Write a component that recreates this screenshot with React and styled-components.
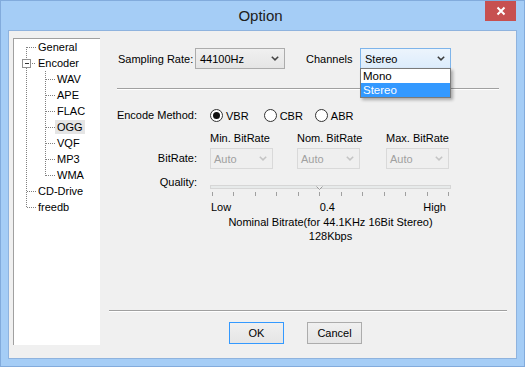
import React from 'react';
import styled, { createGlobalStyle } from 'styled-components';

const treeItems = [
  { label: 'General', level: 0 },
  { label: 'Encoder', level: 0, expander: true },
  { label: 'WAV', level: 1 },
  { label: 'APE', level: 1 },
  { label: 'FLAC', level: 1 },
  { label: 'OGG', level: 1, hovered: true },
  { label: 'VQF', level: 1 },
  { label: 'MP3', level: 1 },
  { label: 'WMA', level: 1 },
  { label: 'CD-Drive', level: 0 },
  { label: 'freedb', level: 0 },
];

const bitrates = [
  { title: 'Min. BitRate', width: 87 },
  { title: 'Nom. BitRate', width: 89 },
  { title: 'Max. BitRate', width: 63 },
];

const TICKS = 12;
const QUALITY_INDEX = 5;

const Chevron = ({ color = '#444' }) => (
  <svg width="8" height="5" viewBox="0 0 8 5">
    <path d="M0.8 0.8 L4 3.9 L7.2 0.8" fill="none" stroke={color} strokeWidth="1.5" />
  </svg>
);

const TreeLines = () => {
  const rowY = (i) => 8 + 16 * i;
  const last = treeItems.length - 1;
  const childRows = treeItems.map((t, i) => (t.level === 1 ? i : null)).filter((i) => i !== null);
  const dot = { stroke: '#808080', strokeDasharray: '1 1', shapeRendering: 'crispEdges' };
  return (
    <LinesSvg width="86" height="306">
      <line x1="12.5" y1={rowY(0)} x2="12.5" y2={rowY(1) - 4} style={dot} />
      <line x1="12.5" y1={rowY(1) + 5} x2="12.5" y2={rowY(last) + 1} style={dot} />
      {treeItems.map((t, i) =>
        t.level === 0 ? (
          <line key={i} x1={t.expander ? 18 : 13} y1={rowY(i) + 0.5} x2="22" y2={rowY(i) + 0.5} style={dot} />
        ) : null
      )}
      <line x1="31.5" y1={rowY(1) + 8} x2="31.5" y2={rowY(childRows[childRows.length - 1]) + 1} style={dot} />
      {childRows.map((i) => (
        <line key={i} x1="32" y1={rowY(i) + 0.5} x2="41" y2={rowY(i) + 0.5} style={dot} />
      ))}
      <rect x="8.5" y="20.5" width="8" height="8" fill="#fff" stroke="#919191" shapeRendering="crispEdges" />
      <line x1="10.5" y1="24.5" x2="15" y2="24.5" stroke="#333" shapeRendering="crispEdges" />
    </LinesSvg>
  );
};

const App = () => {
  return (
    <>
      <GlobalStyle />
      <Window>
        <TitleBar>
          <Title>Option</Title>
          <CloseButton>
            <svg width="10" height="10" viewBox="0 0 10 10">
              <path d="M1.5 1.5 L8.5 8.5 M8.5 1.5 L1.5 8.5" stroke="#fff" strokeWidth="2" />
            </svg>
          </CloseButton>
        </TitleBar>
        <Client>
          <TreePanel>
            <TreeLines />
            {treeItems.map((item) => (
              <TreeRow key={item.label}>
                <TreeLabel $level={item.level} $hovered={item.hovered}>
                  {item.label}
                </TreeLabel>
              </TreeRow>
            ))}
          </TreePanel>

          <Panel>
            <TopRow>
              <Label $width={77}>Sampling Rate:</Label>
              <Combo $width={90}>
                <span>44100Hz</span>
                <Chevron />
              </Combo>
              <Label $width={54} $left={21}>Channels</Label>
              <DropWrap>
                <Combo $width={91} $open>
                  <span>Stereo</span>
                  <Chevron color="#3c3c3c" />
                </Combo>
                <DropList>
                  <DropItem>Mono</DropItem>
                  <DropItem $selected>Stereo</DropItem>
                </DropList>
              </DropWrap>
            </TopRow>

            <Separator $inset={8} $top={19} />

            <FormRow $top={18}>
              <FieldLabel $line={15}>Encode Method:</FieldLabel>
              <RadioOption $gap={15}>
                <Radio $checked />
                VBR
              </RadioOption>
              <RadioOption $gap={12}>
                <Radio />
                CBR
              </RadioOption>
              <RadioOption>
                <Radio />
                ABR
              </RadioOption>
            </FormRow>

            <FormRow $top={8} $align="flex-end">
              <FieldLabel $line={21}>BitRate:</FieldLabel>
              {bitrates.map((b) => (
                <BitrateGroup key={b.title} $width={b.width}>
                  <GroupTitle>{b.title}</GroupTitle>
                  <Combo $width={63} $disabled>
                    <span>Auto</span>
                    <Chevron color="#c4c4c4" />
                  </Combo>
                </BitrateGroup>
              ))}
            </FormRow>

            <FormRow $top={6}>
              <FieldLabel $line={14}>Quality:</FieldLabel>
              <SliderBox>
                <TrackArea>
                  <Track />
                  <Thumb style={{ left: `${2 + (QUALITY_INDEX / (TICKS - 1)) * 236}px` }}>
                    <svg width="7" height="5" viewBox="0 0 7 5">
                      <path d="M0.5 0.5 L3.5 3.5 L6.5 0.5" fill="#f0f0f0" stroke="#9a9a9a" />
                    </svg>
                  </Thumb>
                </TrackArea>
                <Ticks>
                  {Array.from({ length: TICKS }).map((_, i) => (
                    <Tick key={i} />
                  ))}
                </Ticks>
                <Scale>
                  <span>Low</span>
                  <span>0.4</span>
                  <span>High</span>
                </Scale>
                <Info $top={1}>Nominal Bitrate(for 44.1KHz 16Bit Stereo)</Info>
                <Info>128Kbps</Info>
              </SliderBox>
            </FormRow>

            <Spacer />
            <Separator />
            <ButtonRow>
              <Button $default>OK</Button>
              <Button>Cancel</Button>
            </ButtonRow>
          </Panel>
        </Client>
      </Window>
    </>
  );
};

// --- Global ---

const GlobalStyle = createGlobalStyle`
  html, body {
    margin: 0;
    padding: 0;
    background: #a5cdf6;
  }
  body {
    font-family: 'Liberation Sans', Arial, sans-serif;
    font-size: 11px;
    color: #000;
  }
`;

// --- Window frame ---

const Window = styled.div`
  width: 525px;
  height: 367px;
  box-sizing: border-box;
  background: #a5cdf6;
  border: 1px solid #82abdc;
  display: flex;
  flex-direction: column;
`;

const TitleBar = styled.div`
  height: 29px;
  flex: none;
  display: grid;
  grid-template-columns: 1fr auto 1fr;
  align-items: start;
`;

const Title = styled.div`
  grid-column: 2;
  font-size: 15px;
  line-height: 29px;
  color: #202020;
  padding-right: 4px;
`;

const CloseButton = styled.div`
  grid-column: 3;
  justify-self: end;
  margin-right: 8px;
  width: 31px;
  height: 20px;
  background: #c75050;
  display: flex;
  align-items: center;
  justify-content: center;
`;

const Client = styled.div`
  flex: 1;
  margin: 0 7px 7px;
  border: 1px solid #8fb3de;
  background: #f0f0f0;
  display: flex;
  gap: 9px;
  padding: 7px 9px 13px 4px;
  min-height: 0;
`;

// --- Tree ---

const TreePanel = styled.div`
  position: relative;
  width: 87px;
  box-sizing: border-box;
  background: #fff;
  border-top: 1px solid #a0a0a0;
  border-left: 1px solid #a0a0a0;
  display: flex;
  flex-direction: column;
`;

const LinesSvg = styled.svg`
  position: absolute;
  left: 0;
  top: 0;
  pointer-events: none;
`;

const TreeRow = styled.div`
  height: 16px;
  display: flex;
  align-items: center;
`;

const TreeLabel = styled.span`
  margin-left: ${(p) => (p.$level ? 41 : 22)}px;
  padding: 0 2px;
  height: 14px;
  line-height: 14px;
  background: ${(p) => (p.$hovered ? '#e5e5e5' : 'transparent')};
  position: relative;
`;

// --- Right panel ---

const Panel = styled.div`
  flex: 1;
  display: flex;
  flex-direction: column;
`;

const TopRow = styled.div`
  margin-top: 10px;
  height: 21px;
  padding-left: 9px;
  display: flex;
  align-items: center;
`;

const Label = styled.span`
  width: ${(p) => p.$width}px;
  margin-left: ${(p) => p.$left || 0}px;
  white-space: nowrap;
  flex: none;
`;

const Combo = styled.div`
  width: ${(p) => p.$width}px;
  height: 21px;
  box-sizing: border-box;
  display: flex;
  align-items: center;
  justify-content: space-between;
  padding: 0 5px 0 ${(p) => (p.$disabled ? 3 : 4)}px;
  border: 1px solid ${(p) => (p.$open ? '#7eb4ea' : p.$disabled ? '#d9d9d9' : '#acacac')};
  background: ${(p) =>
    p.$open
      ? 'linear-gradient(#ecf4fc, #dcecfc)'
      : p.$disabled
      ? '#efefef'
      : 'linear-gradient(#f0f0f0, #e5e5e5)'};
  color: ${(p) => (p.$disabled ? '#a0a0a0' : '#000')};
  font-size: 11px;
`;

const DropWrap = styled.div`
  position: relative;
`;

const DropList = styled.div`
  position: absolute;
  top: 20px;
  left: 0;
  width: 91px;
  box-sizing: border-box;
  border: 1px solid #7a7a7a;
  background: #fff;
  box-shadow: 2px 2px 3px rgba(0, 0, 0, 0.3);
  z-index: 2;
`;

const DropItem = styled.div`
  height: 14px;
  line-height: 14px;
  padding-left: 2px;
  font-size: 11.5px;
  background: ${(p) => (p.$selected ? '#3399ff' : '#fff')};
  color: ${(p) => (p.$selected ? '#fff' : '#000')};
`;

const Separator = styled.div`
  margin: ${(p) => p.$top || 0}px ${(p) => p.$inset || 0}px 0;
  height: 0;
  border-top: 1px solid #a0a0a0;
  border-bottom: 1px solid #fff;
  flex: none;
`;

const FormRow = styled.div`
  margin-top: ${(p) => p.$top}px;
  display: flex;
  align-items: ${(p) => p.$align || 'flex-start'};
`;

const FieldLabel = styled.span`
  width: 88px;
  margin-right: 13px;
  text-align: right;
  line-height: ${(p) => p.$line}px;
  white-space: nowrap;
  flex: none;
`;

const RadioOption = styled.label`
  display: flex;
  align-items: center;
  gap: 3px;
  height: 15px;
  margin-right: ${(p) => p.$gap || 0}px;
`;

const Radio = styled.span`
  width: 13px;
  height: 13px;
  box-sizing: border-box;
  border-radius: 50%;
  border: 1px solid #333;
  background: #fff;
  display: inline-flex;
  align-items: center;
  justify-content: center;

  &::after {
    content: '';
    width: 7px;
    height: 7px;
    border-radius: 50%;
    background: #111;
    display: ${(p) => (p.$checked ? 'block' : 'none')};
  }
`;

const BitrateGroup = styled.div`
  width: ${(p) => p.$width}px;
  flex: none;
  display: flex;
  flex-direction: column;
  gap: 3px;
`;

const GroupTitle = styled.span`
  line-height: 14px;
  white-space: nowrap;
`;

const SliderBox = styled.div`
  width: 241px;
  display: flex;
  flex-direction: column;
`;

const TrackArea = styled.div`
  position: relative;
  height: 14px;
  padding-top: 10px;
  box-sizing: border-box;
`;

const Track = styled.div`
  height: 4px;
  box-sizing: border-box;
  border: 1px solid #d6d6d6;
  background: #e7eaea;
`;

const Thumb = styled.div`
  position: absolute;
  top: 11px;
  width: 7px;
  height: 5px;
  margin-left: -3px;
  display: flex;
`;

const Ticks = styled.div`
  margin-top: 3px;
  padding: 0 2px;
  height: 4px;
  display: flex;
  justify-content: space-between;
`;

const Tick = styled.span`
  width: 1px;
  height: 4px;
  background: #a0a0a0;
`;

const Scale = styled.div`
  margin-top: 5px;
  padding: 0 5px 0 1px;
  line-height: 13px;
  display: flex;
  justify-content: space-between;
`;

const Info = styled.div`
  margin-top: ${(p) => p.$top || 0}px;
  line-height: 14px;
  text-align: center;
  white-space: nowrap;
`;

const Spacer = styled.div`
  flex: 1;
`;

const ButtonRow = styled.div`
  margin-top: 10px;
  margin-bottom: 1px;
  padding-left: 120px;
  display: flex;
  gap: 23px;
`;

const Button = styled.button`
  width: 55px;
  height: 22px;
  box-sizing: border-box;
  padding: 0;
  font-family: 'Liberation Sans', Arial, sans-serif;
  font-size: 11px;
  color: #000;
  border: 1px solid ${(p) => (p.$default ? '#3399ff' : '#acacac')};
  background: linear-gradient(#f0f0f0, #e5e5e5);
`;

export default App;
